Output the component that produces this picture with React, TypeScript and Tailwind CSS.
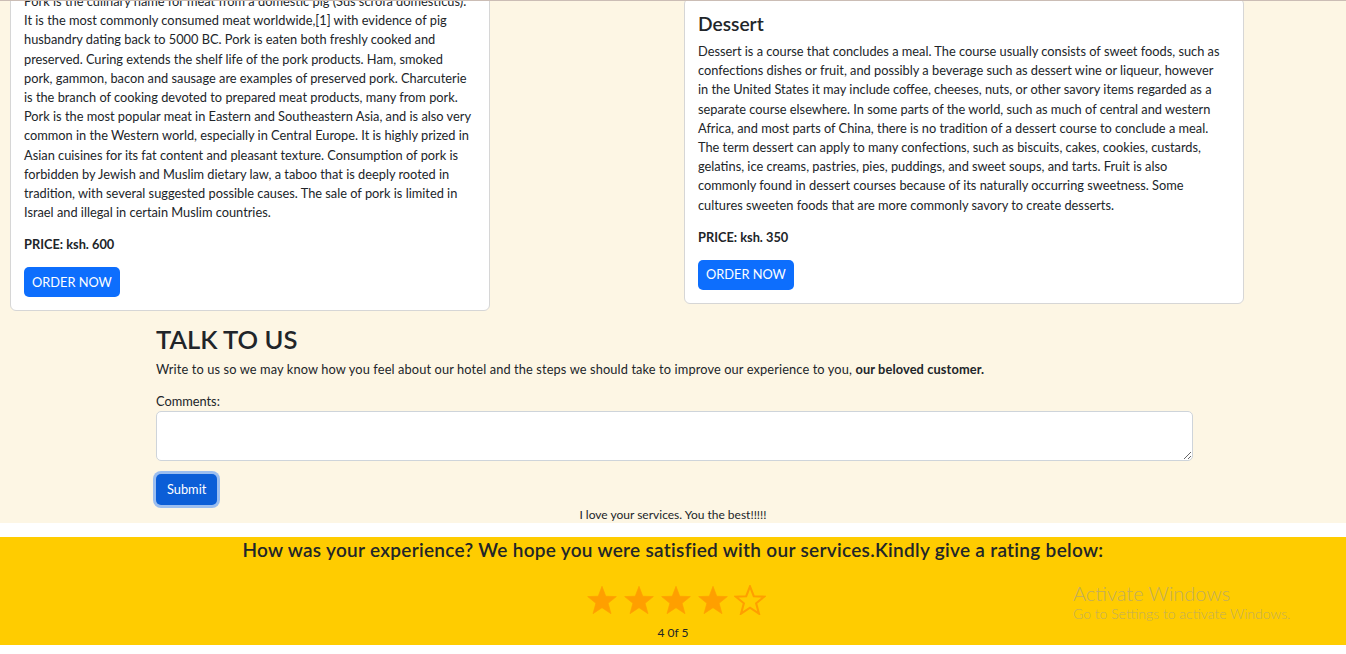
import React from 'react';

const porkLines = [
  'Pork is the culinary name for meat from a domestic pig (Sus scrofa domesticus).',
  'It is the most commonly consumed meat worldwide,[1] with evidence of pig',
  'husbandry dating back to 5000 BC. Pork is eaten both freshly cooked and',
  'preserved. Curing extends the shelf life of the pork products. Ham, smoked',
  'pork, gammon, bacon and sausage are examples of preserved pork. Charcuterie',
  'is the branch of cooking devoted to prepared meat products, many from pork.',
  'Pork is the most popular meat in Eastern and Southeastern Asia, and is also very',
  'common in the Western world, especially in Central Europe. It is highly prized in',
  'Asian cuisines for its fat content and pleasant texture. Consumption of pork is',
  'forbidden by Jewish and Muslim dietary law, a taboo that is deeply rooted in',
  'tradition, with several suggested possible causes. The sale of pork is limited in',
  'Israel and illegal in certain Muslim countries.',
];

const dessertLines = [
  'Dessert is a course that concludes a meal. The course usually consists of sweet foods, such as',
  'confections dishes or fruit, and possibly a beverage such as dessert wine or liqueur, however',
  'in the United States it may include coffee, cheeses, nuts, or other savory items regarded as a',
  'separate course elsewhere. In some parts of the world, such as much of central and western',
  'Africa, and most parts of China, there is no tradition of a dessert course to conclude a meal.',
  'The term dessert can apply to many confections, such as biscuits, cakes, cookies, custards,',
  'gelatins, ice creams, pastries, pies, puddings, and sweet soups, and tarts. Fruit is also',
  'commonly found in dessert courses because of its naturally occurring sweetness. Some',
  'cultures sweeten foods that are more commonly savory to create desserts.',
];

const Lines = ({ lines }: { lines: string[] }) => (
  <p className="mb-[12.8px] text-[12.8px] leading-[19.2px]">
    {lines.map((l) => (
      <span key={l} className="block whitespace-nowrap">
        {l}
      </span>
    ))}
  </p>
);

const OrderButton = () => (
  <button className="h-[30px] px-[8px] rounded-[5px] bg-[#0d6efd] text-white text-[12.8px] leading-none">
    ORDER NOW
  </button>
);

const Star = ({ filled }: { filled: boolean }) => (
  <svg width="32" height="30" viewBox="0 0 24 23">
    <polygon
      points="12,1 14.9,8.6 23,8.9 16.7,14 18.9,22 12,17.4 5.1,22 7.3,14 1,8.9 9.1,8.6"
      fill={filled ? '#ff9f00' : 'none'}
      stroke="#ff9f00"
      strokeWidth={filled ? 0.5 : 1.6}
      strokeLinejoin="miter"
    />
  </svg>
);

export default function App() {
  return (
    <div className="relative h-[654px] overflow-hidden bg-white border-t border-[#cbbdb5] font-['Lato',sans-serif] text-[#212529]">
      {/* cream page area */}
      <div className="bg-[#fdf6e4] pb-[1px]">
        {/* menu cards, scrolled partly out of view */}
        <div className="flex items-start pl-[10px] gap-[194px]">
          <div className="-mt-[23px] w-[480px] rounded-[6px] border border-[#d6d6d6] bg-white p-[13px]">
            <Lines lines={porkLines} />
            <p className="mb-[12.8px] text-[12.8px] leading-[19.2px] font-bold">PRICE: ksh. 600</p>
            <OrderButton />
          </div>
          <div className="-mt-[3px] w-[560px] rounded-[6px] border border-[#d6d6d6] bg-white p-[13px]">
            <h4 className="mb-[7px] text-[19.2px] leading-[23px] font-semibold">Dessert</h4>
            <Lines lines={dessertLines} />
            <p className="mb-[12.8px] text-[12.8px] leading-[19.2px] font-bold">PRICE: ksh. 350</p>
            <OrderButton />
          </div>
        </div>

        {/* talk to us */}
        <div className="ml-[156px] w-[1037px] pt-[13px]">
          <h2 className="mb-[5px] text-[25.6px] leading-[31px] font-semibold">TALK TO US</h2>
          <p className="mb-[12.8px] text-[12.8px] leading-[19.2px] tracking-[0.12px]">
            Write to us so we may know how you feel about our hotel and the steps we should take to improve our
            experience to you, <b>our beloved customer.</b>
          </p>
          <label className="block text-[12.8px] leading-[19.2px]">Comments:</label>
          <textarea className="block w-full h-[50px] rounded-[5px] border border-[#ced4da] bg-white" />
          <button className="mt-[13px] h-[31px] px-[11px] rounded-[5px] bg-[#0b5ed7] text-white text-[12.8px] ring-[3px] ring-[#9bbef0]">
            Submit
          </button>
        </div>
        <p className="text-center text-[12px] leading-[16px] mt-[2px] -mb-[1px]">I love your services. You the best!!!!!</p>
      </div>

      {/* rating band */}
      <div className="mt-[14px] h-[108px] bg-[#ffcc00] flex flex-col items-center pt-[2px]">
        <h3 className="text-[19px] leading-[22px] font-semibold tracking-[0.3px]">
          How was your experience? We hope you were satisfied with our services.Kindly give a rating below:
        </h3>
        <div className="mt-[24px] flex gap-[5px] ml-[5px]">
          {[1, 2, 3, 4, 5].map((n) => (
            <Star key={n} filled={n <= 4} />
          ))}
        </div>
        <p className="mt-[10px] text-[12px] leading-[16px]">4 0f 5</p>
      </div>

      {/* windows watermark */}
      <div className="absolute left-[1073px] top-[580px] text-[#c2ad5e] pointer-events-none">
        <p className="text-[20px] leading-[24px] font-light">Activate Windows</p>
        <p className="text-[14px] leading-[18px] font-light">Go to Settings to activate Windows.</p>
      </div>
    </div>
  );
}
